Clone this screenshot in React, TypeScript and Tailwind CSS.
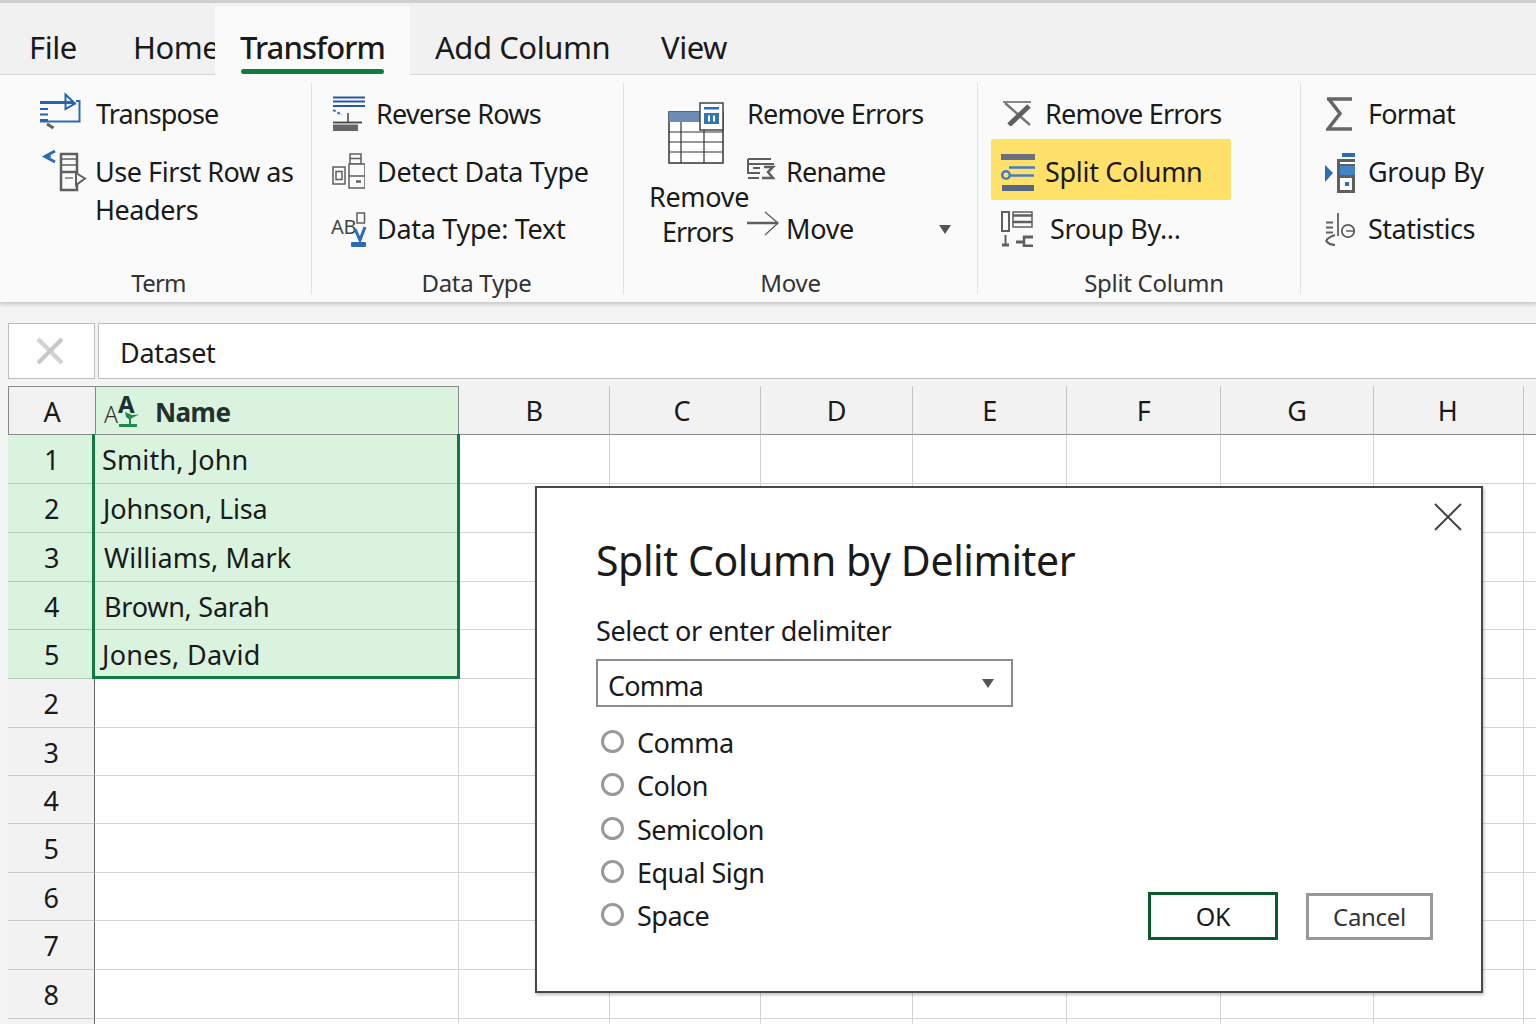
import React from "react";

const font = { fontFamily: '"Noto Sans", "Open Sans", sans-serif' };

const BLUE = "#2b6cb5";
const GRAY = "#5f5f5f";

function TransposeIcon() {
  return (
    <svg width="41" height="36" viewBox="0 0 41 36" fill="none" className="shrink-0 -mt-[4px] overflow-visible">
      <path d="M0 8.5H34" stroke="#2464b4" strokeWidth="3" />
      <path d="M25.5 0.5L35 9.5L25.5 15Z" stroke="#2464b4" strokeWidth="2" />
      <path d="M36 7H39.5V27.5H0" stroke={BLUE} strokeWidth="2" />
      <path d="M0 15H8M0 20.5H8M0 26H8" stroke="#2464b4" strokeWidth="2.2" />
      <path d="M7 30L13.5 34" stroke={GRAY} strokeWidth="3" />
    </svg>
  );
}
function FirstRowIcon() {
  return (
    <svg width="44" height="42" viewBox="0 0 44 42" fill="none" className="shrink-0 overflow-visible">
      <path d="M13 2L3 7.5L13 13" stroke="#2b6cb5" strokeWidth="3" />
      <path d="M3 7.5H9" stroke="#2b6cb5" strokeWidth="2" />
      <rect x="19" y="5" width="16" height="36" stroke={GRAY} strokeWidth="2.5" fill="#fafafa" />
      <path d="M20 10H34M20 16H34" stroke={GRAY} strokeWidth="1.5" />
      <path d="M19 23H35" stroke={GRAY} strokeWidth="2.5" />
      <path d="M23 29H31" stroke="#999" strokeWidth="2" />
      <path d="M34 24L43 29.5L34 36Z" fill="#fafafa" stroke={GRAY} strokeWidth="2" />
    </svg>
  );
}
function ReverseRowsIcon() {
  return (
    <svg width="33" height="36" viewBox="0 0 33 36" fill="none" className="shrink-0 -mt-[2px]">
      <path d="M1 1.5H33M1 5.5H33M1 10H33" stroke="#2459a8" strokeWidth="2" />
      <path d="M1 14L10 19" stroke={BLUE} strokeWidth="2" strokeDasharray="3 2" />
      <path d="M16 17V26" stroke="#444" strokeWidth="1.5" />
      <path d="M1 26.5H30" stroke="#444" strokeWidth="1.8" />
      <rect x="1" y="28.5" width="25" height="6.5" fill="#666" />
    </svg>
  );
}
function DetectIcon() {
  return (
    <svg width="33" height="36" viewBox="0 0 33 36" fill="none" stroke={GRAY} strokeWidth="1.5" className="shrink-0 -mt-[3px]">
      <rect x="1" y="14" width="12" height="17" fill="#fafafa" />
      <rect x="4" y="18.5" width="6" height="8" />
      <rect x="18" y="1" width="11" height="10" />
      <path d="M18 5.5H29" />
      <rect x="17" y="11" width="16" height="24" fill="#fafafa" />
      <path d="M17 23H33" />
      <path d="M24 28.5H29" strokeWidth="2.5" />
    </svg>
  );
}
function DataTypeIcon() {
  return (
    <svg width="35" height="36" viewBox="0 0 35 36" fill="none" className="shrink-0 overflow-visible">
      <text x="0" y="22" fontSize="20" fill="#444" fontFamily="Noto Sans, sans-serif">AB</text>
      <rect x="26" y="1" width="7.5" height="10" stroke={GRAY} strokeWidth="1.5" />
      <path d="M24 17L29 28L34 15" stroke={BLUE} strokeWidth="3" />
      <rect x="20" y="30" width="15" height="5" rx="1" fill={BLUE} />
    </svg>
  );
}
function BigTableIcon() {
  return (
    <svg width="56" height="62" viewBox="0 0 56 62" fill="none" className="shrink-0">
      <rect x="1" y="10" width="54" height="51" fill="#fff" stroke="#333" strokeWidth="1.5" />
      <rect x="1" y="10" width="54" height="10" fill="#6d8bb5" />
      <path d="M1 30H55M1 40H55M1 50H55M13 20V61M36 20V61" stroke="#333" strokeWidth="1.2" />
      <rect x="32" y="1" width="23" height="27" fill="#fff" stroke="#444" strokeWidth="1.5" />
      <rect x="36" y="5" width="15" height="2.5" fill={BLUE} />
      <rect x="36" y="11" width="15" height="11" fill="#2f77ad" />
      <path d="M41 13.5V19.5M46 13.5V19.5" stroke="#fff" strokeWidth="2" />
    </svg>
  );
}
function RenameIcon() {
  return (
    <svg width="29" height="23" viewBox="0 0 29 23" fill="none" stroke={GRAY} className="shrink-0 -mt-[8px]">
      <path d="M1 2H24M1 7H27M1 2V16H13" strokeWidth="2" />
      <path d="M6 11H13" strokeWidth="2" />
      <path d="M17 10H26L21 15L26 21H15" strokeWidth="2.5" />
      <path d="M1 21H12" strokeWidth="2" />
    </svg>
  );
}
function ArrowIcon() {
  return (
    <svg width="32" height="25" viewBox="0 0 32 25" fill="none" className="shrink-0 -mt-[12px]">
      <path d="M0 12H31" stroke={GRAY} strokeWidth="2.5" />
      <path d="M18 1L31 12L18 24" stroke={GRAY} strokeWidth="1.3" />
    </svg>
  );
}
function CrossIcon() {
  return (
    <svg width="29" height="25" viewBox="0 0 29 25" fill="none" className="shrink-0 -mt-[2px]">
      <path d="M0 1H28" stroke={GRAY} strokeWidth="1.5" />
      <path d="M2 2L27 24" stroke="#777" strokeWidth="2.5" />
      <path d="M26 5L6 24" stroke={GRAY} strokeWidth="5" />
    </svg>
  );
}
function SplitIcon() {
  return (
    <svg width="34" height="38" viewBox="0 0 34 38" fill="none" className="shrink-0">
      <rect x="0" y="1" width="34" height="6" fill="#6b7080" />
      <path d="M8 14.5H34" stroke="#3f7fc8" strokeWidth="2.5" />
      <path d="M9 22.5H33" stroke="#3f7fc8" strokeWidth="2.5" />
      <circle cx="5" cy="22" r="3.8" stroke="#3f7fc8" strokeWidth="2.5" />
      <rect x="1" y="32" width="32" height="6" fill="#566784" />
    </svg>
  );
}
function GroupSmallIcon() {
  return (
    <svg width="33" height="36" viewBox="0 0 33 36" fill="none" className="shrink-0">
      <rect x="1" y="1" width="7" height="19" stroke={GRAY} strokeWidth="2" />
      <rect x="12" y="1" width="19" height="15" stroke={GRAY} strokeWidth="1.5" />
      <path d="M12 4.5H31M12 11H31" stroke={GRAY} strokeWidth="2.5" />
      <path d="M4.5 24V33" stroke={GRAY} strokeWidth="2" />
      <path d="M1 34H8" stroke={GRAY} strokeWidth="3" />
      <path d="M15 31H24M22 26H32M22 35H32" stroke={GRAY} strokeWidth="3" />
      <path d="M23 25V36" stroke={GRAY} strokeWidth="2.5" />
    </svg>
  );
}
function SigmaIcon() {
  return (
    <svg width="27" height="34" viewBox="0 0 27 34" fill="none" className="shrink-0 -mt-[2px]">
      <path d="M1 2H26M2 1L14 16.5L2 32H26" stroke="#666" strokeWidth="3.5" />
    </svg>
  );
}
function GroupByIcon() {
  return (
    <svg width="30" height="40" viewBox="0 0 30 40" fill="none" className="shrink-0">
      <path d="M0 12L8 20L0 29Z" fill={BLUE} />
      <rect x="12" y="6" width="18" height="34" fill={GRAY} />
      <rect x="17" y="0" width="13" height="4" fill={BLUE} />
      <rect x="15" y="9" width="15" height="2" fill="#fff" />
      <rect x="15" y="13" width="15" height="9" fill="#3f85c8" />
      <rect x="15" y="25" width="12" height="12" fill="#fff" />
      <rect x="20" y="29" width="4" height="4" fill={BLUE} />
    </svg>
  );
}
function StatsIcon() {
  return (
    <svg width="30" height="33" viewBox="0 0 30 33" fill="none" stroke={GRAY} className="shrink-0">
      <path d="M1 9.5H8M1 14.5H8M1 19.5H8" strokeWidth="1.8" />
      <path d="M13 0V23" strokeWidth="1.8" />
      <circle cx="23" cy="18" r="6.2" strokeWidth="1.8" />
      <path d="M21 18H29" strokeWidth="1.5" />
      <path d="M10 22C4 24 0 27 2 29C4 31 7 32 10 32" strokeWidth="2.2" />
    </svg>
  );
}
function NameTypeIcon() {
  return (
    <svg width="36" height="34" viewBox="0 0 36 34" fill="none" className="shrink-0 overflow-visible">
      <text x="0" y="29" fontSize="23" fontWeight="300" fill="#333" fontFamily="Noto Sans, sans-serif">A</text>
      <text x="14" y="19" fontSize="24" fontWeight="700" fill="#1f3030" fontFamily="Noto Sans, sans-serif">A</text>
      <path d="M21 18L28 21L35 20.5L28 24L26 26L22 23Z" fill="#1f8a50" />
      <path d="M26 25V30" stroke="#1f8a50" strokeWidth="2" />
      <rect x="15" y="30" width="18" height="3" fill="#1f8a50" />
    </svg>
  );
}

function RibbonRow({ icon, text, cls, textCls = "" }: { icon?: React.ReactNode; text: string; cls: string; textCls?: string }) {
  return (
    <div className={`flex items-center ${cls}`}>
      {icon}
      <span className={`whitespace-nowrap ${textCls}`}>{text}</span>
    </div>
  );
}

function Label({ children, cls }: { children: string; cls: string }) {
  return <div className={`mt-auto h-[22px] leading-[22px] text-[24px] text-[#333] text-center ${cls}`}>{children}</div>;
}

const tabs = [
  { name: "File", cls: "ml-[29px] w-[104px]" },
  { name: "Home", cls: "w-[82px]" },
];

const colsTpl = "grid grid-cols-[87px_364px_151px_151px_152px_154px_154px_153px_150px_12px]";
const headers = [
  { c: "B", cls: "" },
  { c: "C", cls: "pr-[6px]" },
  { c: "D", cls: "" },
  { c: "E", cls: "" },
  { c: "F", cls: "" },
  { c: "G", cls: "" },
  { c: "H", cls: "pr-[2px]" },
];

const dataRows = [
  { n: "1", h: "h-[49px]", text: "Smith, John", cls: "pl-[7px] tracking-[0.15px]" },
  { n: "2", h: "h-[49px]", text: "Johnson, Lisa", cls: "pl-[8px] tracking-[-0.15px]" },
  { n: "3", h: "h-[49px]", text: "Williams, Mark", cls: "pl-[9px] tracking-[0.1px]" },
  { n: "4", h: "h-[48px]", text: "Brown, Sarah", cls: "pl-[9px] tracking-[-0.25px]" },
  { n: "5", h: "h-[49px]", text: "Jones, David", cls: "pl-[7px] tracking-[0.3px]" },
];
const emptyRows = [
  { n: "2", h: "h-[49px]" },
  { n: "3", h: "h-[48px]" },
  { n: "4", h: "h-[48px]" },
  { n: "5", h: "h-[49px]" },
  { n: "6", h: "h-[48px]" },
  { n: "7", h: "h-[49px]" },
  { n: "8", h: "h-[49px]" },
];
const radios = [
  { t: "Comma", cls: "h-[43px]" },
  { t: "Colon", cls: "h-[43px]" },
  { t: "Semicolon", cls: "h-[44px]" },
  { t: "Equal Sign", cls: "h-[43px]" },
  { t: "Space", cls: "h-[43px]" },
];

function BlankCells({ h }: { h: string }) {
  return (
    <>
      {headers.map((c) => (
        <div key={c.c} className={`${h} border-r border-b border-[#d4d4d4] bg-white`} />
      ))}
      <div className={`${h} border-b border-[#d4d4d4] bg-white`} />
    </>
  );
}

export default function App() {
  return (
    <div style={font} className="relative w-[1536px] h-[1024px] overflow-hidden bg-[#f3f3f3] text-[#1a1a1a] tracking-[-0.3px]">
      {/* Tab strip */}
      <div className="flex items-end h-[75px] border-t-[3px] border-b border-t-[#cfcfcf] border-b-[#d6d6d6] bg-[#f1f1f1] text-[31px] tracking-[-0.45px]">
        {tabs.map((t) => (
          <div key={t.name} className={`h-[68px] flex items-center pt-[14px] ${t.cls}`}>{t.name}</div>
        ))}
        <div className="relative h-[69px] w-[195px] -mb-px bg-[#fafafa] flex justify-center items-center pt-[14px] font-medium tracking-[-0.9px]">
          Transform
          <div className="absolute left-[26px] right-[26px] bottom-[1px] h-[5px] rounded-full bg-[#107c41]" />
        </div>
        <div className="h-[68px] flex items-center pt-[14px] ml-[25px] w-[226px]">Add Column</div>
        <div className="h-[68px] flex items-center pt-[14px]">View</div>
      </div>

      {/* Ribbon */}
      <div className="flex h-[228px] bg-[#fafafa] text-[27px] border-b border-[#cfcfcf] shadow-[0_2px_3px_rgba(0,0,0,0.14)]">
        <div className="flex flex-col w-[312px] my-2 border-r border-[#e2e2e2]">
          <RibbonRow cls="mt-[11px] h-[40px] ml-[40px] gap-[15px]" textCls="tracking-[-0.85px]" icon={<TransposeIcon />} text="Transpose" />
          <div className="flex items-start ml-[42px] mt-[15px] gap-[9px]">
            <FirstRowIcon />
            <div className="leading-[38px] mt-[4px] tracking-[-0.45px]">Use First Row as<br />Headers</div>
          </div>
          <Label cls="pl-[6px] tracking-[-0.8px]">Term</Label>
        </div>

        <div className="flex flex-col w-[312px] my-2 border-r border-[#e2e2e2]">
          <RibbonRow cls="mt-[2px] h-[59px] ml-[20px] gap-[11px]" textCls="tracking-[-0.7px]" icon={<ReverseRowsIcon />} text="Reverse Rows" />
          <RibbonRow cls="h-[57px] ml-[20px] gap-[12px]" icon={<DetectIcon />} text="Detect Data Type" />
          <RibbonRow cls="h-[57px] ml-[19px] gap-[11px]" icon={<DataTypeIcon />} text="Data Type: Text" />
          <Label cls="pl-[18px]">Data Type</Label>
        </div>

        <div className="flex flex-col w-[354px] my-2 border-r border-[#e2e2e2]">
          <div className="flex">
            <div className="flex flex-col items-center w-[96px] ml-[27px] mt-[19px]">
              <div className="pr-[6px]"><BigTableIcon /></div>
              <div className="text-center leading-[35px] mt-[15px]">
                Remove<br />
                <span className="inline-block mr-[3px] tracking-[-1px]">Errors</span>
              </div>
            </div>
            <div className="flex flex-col flex-1 pr-[26px]">
              <RibbonRow cls="mt-[2px] h-[59px]" textCls="tracking-[-0.76px]" text="Remove Errors" />
              <RibbonRow cls="h-[57px] gap-[10px]" textCls="tracking-[-0.8px]" icon={<RenameIcon />} text="Rename" />
              <div className="flex items-center justify-between h-[57px]">
                <div className="flex items-center gap-[7px]"><ArrowIcon /><span>Move</span></div>
                <div className="w-0 h-0 border-l-[6px] border-r-[6px] border-t-[9px] border-l-transparent border-r-transparent border-t-[#555]" />
              </div>
            </div>
          </div>
          <Label cls="pr-[20px]">Move</Label>
        </div>

        <div className="flex flex-col w-[323px] my-2 border-r border-[#e2e2e2]">
          <RibbonRow cls="mt-[7px] h-[49px] ml-[25px] gap-[13px]" textCls="tracking-[-0.76px]" icon={<CrossIcon />} text="Remove Errors" />
          <div className="flex items-center pt-[5px] gap-[10px] pl-[10px] ml-[13px] w-[240px] h-[61px] bg-[#ffe068] rounded-[2px]">
            <SplitIcon />
            <span className="whitespace-nowrap">Split Column</span>
          </div>
          <RibbonRow cls="h-[58px] ml-[23px] gap-[16px]" icon={<GroupSmallIcon />} text="Sroup By..." />
          <Label cls="pl-[30px]">Split Column</Label>
        </div>

        <div className="flex flex-col flex-1 my-2">
          <RibbonRow cls="mt-[2px] h-[59px] ml-[25px] gap-[15px]" textCls="tracking-[-0.8px]" icon={<SigmaIcon />} text="Format" />
          <RibbonRow cls="h-[57px] ml-[24px] gap-[13px]" icon={<GroupByIcon />} text="Group By" />
          <RibbonRow cls="h-[57px] ml-[24px] gap-[13px]" textCls="tracking-[-0.5px]" icon={<StatsIcon />} text="Statistics" />
        </div>
      </div>

      {/* Formula bar */}
      <div className="flex gap-[3px] mt-[20px] ml-[8px] h-[56px] text-[27px]">
        <div className="flex items-center justify-center w-[87px] bg-white border border-[#bdbdbd]">
          <svg width="28" height="28" viewBox="0 0 28 28" fill="none" className="mr-[4px]">
            <path d="M2 2L26 26" stroke="#d2d2d2" strokeWidth="4.5" />
            <path d="M26 2L2 26" stroke="#c8c8c8" strokeWidth="4" />
          </svg>
        </div>
        <div className="flex items-center flex-1 pl-[21px] pt-[4px] bg-white border border-r-0 border-[#bdbdbd]">Dataset</div>
      </div>

      {/* Grid */}
      <div className="relative ml-[8px] mt-[7px] text-[27px]">
        <div className={colsTpl}>
          <div className="h-[49px] flex items-center justify-center pt-[3px] bg-[#f2f2f2] border border-r-0 border-[#8a8a8a]">A</div>
          <div className="h-[49px] flex items-center bg-[#d9f3df] border border-[#8a8a8a] pl-[8px] gap-[15px] font-bold text-[#22302e] text-[26px] tracking-[-0.55px]">
            <NameTypeIcon />
            <span className="pt-[3px]">Name</span>
          </div>
          {headers.map((c) => (
            <div key={c.c} className={`h-[49px] flex items-center justify-center pt-[3px] bg-[#f2f2f2] border-r border-b border-r-[#c4c4c4] border-b-[#8a8a8a] ${c.cls}`}>{c.c}</div>
          ))}
          <div className="h-[49px] bg-[#f2f2f2] border-b border-[#8a8a8a]" />
          {dataRows.map((r) => (
            <React.Fragment key={r.text}>
              <div className={`${r.h} flex items-center justify-center pt-[3px] bg-[#d9f3df] border-b border-[#b5c9ba]`}>{r.n}</div>
              <div className={`${r.h} flex items-center pt-[3px] bg-[#d9f3df] border-b border-[#b5c9ba] ${r.cls}`}>{r.text}</div>
              <BlankCells h={r.h} />
            </React.Fragment>
          ))}
          {emptyRows.map((r, i) => (
            <React.Fragment key={i}>
              <div className={`${r.h} flex items-center justify-center pt-[3px] bg-[#f2f2f2] border-b border-r border-b-[#c8c8c8] border-r-[#666]`}>{r.n}</div>
              <div className={`${r.h} bg-white border-b border-r border-[#d4d4d4]`} />
              <BlankCells h={r.h} />
            </React.Fragment>
          ))}
          <div className="h-[20px] bg-[#f2f2f2] border-r border-[#666]" />
          <div className="h-[20px] bg-white border-r border-[#d4d4d4]" />
          <BlankCells h="h-[20px]" />
        </div>
        {/* Column selection */}
        <div className="absolute left-[84px] top-[48px] w-[368px] h-[245px] border-[3px] border-t-0 border-[#0f7b42] pointer-events-none" />
      </div>

      {/* Dialog */}
      <div className="absolute left-[535px] top-[486px] w-[948px] h-[507px] bg-white border-2 border-[#484848] shadow-[1px_2px_3px_rgba(0,0,0,0.25)] pl-[59px] pr-[48px]">
        <svg width="28" height="28" viewBox="0 0 28 28" fill="none" className="absolute right-[19px] top-[15px]">
          <path d="M1 1L27 27M27 1L1 27" stroke="#444" strokeWidth="2" />
        </svg>
        <div className="mt-[42px] h-[60px] leading-[60px] text-[41px] tracking-[-0.4px]">Split Column by Delimiter</div>
        <div className="mt-[21px] h-[40px] leading-[40px] text-[27px] tracking-[-0.42px]">Select or enter delimiter</div>
        <div className="flex items-center justify-between mt-[8px] w-[417px] h-[48px] pl-[10px] pr-[17px] border-2 border-[#8c8c8c] text-[27px]">
          <span className="pt-[7px] tracking-[-0.8px]">Comma</span>
          <div className="w-0 h-0 border-l-[6px] border-r-[6px] border-t-[9px] border-l-transparent border-r-transparent border-t-[#555]" />
        </div>
        <div className="flex items-end justify-between mt-[13px]">
          <div className="flex flex-col text-[27px] tracking-[-0.5px]">
            {radios.map((r) => (
              <div key={r.t} className={`flex items-center gap-[13px] pl-[5px] ${r.cls}`}>
                <div className="w-[23px] h-[23px] rounded-full border-[3px] border-[#999] bg-white" />
                <span className="pt-[4px]">{r.t}</span>
              </div>
            ))}
          </div>
          <div className="flex items-end gap-[28px] -mb-[4px]">
            <button className="w-[130px] h-[48px] pt-[2px] border-[3px] border-[#0b5a2c] text-[25px] flex items-center justify-center">OK</button>
            <button className="w-[127px] h-[47px] border-[3px] border-[#999] text-[24px] text-[#333] flex items-center justify-center">Cancel</button>
          </div>
        </div>
      </div>
    </div>
  );
}
